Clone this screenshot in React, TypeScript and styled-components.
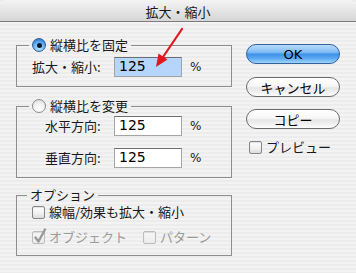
import React from "react";
import styled, { createGlobalStyle, css } from "styled-components";

const GlobalStyle = createGlobalStyle`
  html, body { margin: 0; padding: 0; background: #ffffff; }
  body { font-family: "Noto Sans CJK JP", "Noto Sans", sans-serif; }
  * { box-sizing: border-box; }
`;

const Window = styled.div`
  position: relative;
  width: 356px;
  height: 273px;
  overflow: hidden;
  background: repeating-linear-gradient(
    to bottom,
    #ececec 0px,
    #ececec 2px,
    #f3f3f3 2px,
    #f3f3f3 4px
  );
  font-family: "Noto Sans CJK JP", "Noto Sans", sans-serif;
  font-size: 13px;
  color: #1a1a1a;
`;

const TitleBar = styled.div`
  height: 22px;
  display: flex;
  align-items: center;
  justify-content: center;
  border-radius: 7px 7px 0 0;
  border-bottom: 1px solid #7d7d7d;
  background: linear-gradient(to bottom, #f4f4f4 0%, #e6e6e6 45%, #d6d6d6 100%);
  font-size: 13px;
  line-height: 21px;
  color: #1a1a1a;
  padding-top: 1px;
`;

const Body = styled.div`
  display: flex;
  padding: 15px 0 0 16px;
`;

const LeftColumn = styled.div`
  width: 216px;
  display: flex;
  flex-direction: column;
`;

const Group = styled.fieldset<{ $gap: number; $pt: number; $pb: number }>`
  margin: ${(p) => p.$gap}px 0 0 0;
  padding: ${(p) => p.$pt}px 0 ${(p) => p.$pb}px 0;
  border: 1px solid #8e8e8e;
  min-width: 0;
  display: flex;
  flex-direction: column;
`;

const Legend = styled.legend<{ $ml: number }>`
  margin-left: ${(p) => p.$ml}px;
  padding: 0 3px;
  height: 16px;
  line-height: 16px;
  display: flex;
  align-items: center;
  gap: 4px;
  font-size: 13px;
  color: #1a1a1a;
`;

const Radio = styled.span<{ $on?: boolean }>`
  width: 14px;
  height: 14px;
  border-radius: 50%;
  display: inline-flex;
  align-items: center;
  justify-content: center;
  flex: none;
  ${(p) =>
    p.$on
      ? css`
          border: 1px solid #3a5f95;
          background: radial-gradient(circle at 50% 75%, #bfe6ff 0%, #6db6f5 45%, #2f7fde 80%, #255fae 100%);
          &::after {
            content: "";
            width: 5px;
            height: 5px;
            border-radius: 50%;
            background: #0c1830;
          }
        `
      : css`
          border: 1px solid #8d8d8d;
          background: radial-gradient(circle at 50% 75%, #ffffff 0%, #f2f2f2 50%, #d2d2d2 100%);
        `}
`;

const FieldRow = styled.div<{ $mt?: number }>`
  display: flex;
  align-items: center;
  margin-top: ${(p) => p.$mt ?? 0}px;
  height: 20px;
`;

const FieldLabel = styled.span<{ $indent: number }>`
  width: 97px;
  padding-left: ${(p) => p.$indent}px;
  white-space: nowrap;
  font-size: 13px;
  line-height: 20px;
  color: #1a1a1a;
`;

const Input = styled.div<{ $selected?: boolean }>`
  width: 68px;
  height: 20px;
  border: 1px solid #a4a4a4;
  border-top-color: #6e6e6e;
  background: ${(p) => (p.$selected ? "#b6d5fa" : "#ffffff")};
  font-family: "DejaVu Sans", "Liberation Sans", sans-serif;
  font-size: 14px;
  line-height: 16px;
  padding: 0 0 0 4px;
  color: #000;
`;

const Percent = styled.span`
  margin-left: 8px;
  font-family: "DejaVu Sans", "Liberation Sans", sans-serif;
  font-size: 12px;
  color: #1a1a1a;
`;

const CheckRow = styled.div<{ $mt?: number; $pl?: number }>`
  display: flex;
  align-items: center;
  height: 16px;
  margin-top: ${(p) => p.$mt ?? 0}px;
  padding-left: ${(p) => p.$pl ?? 0}px;
`;

const CheckItem = styled.span<{ $disabled?: boolean; $ml?: number }>`
  display: inline-flex;
  align-items: center;
  gap: 4px;
  margin-left: ${(p) => p.$ml ?? 0}px;
  color: ${(p) => (p.$disabled ? "#9b9b9b" : "#1a1a1a")};
  font-size: 13px;
  line-height: 16px;
`;

const Box = styled.span<{ $disabled?: boolean }>`
  position: relative;
  width: 13px;
  height: 13px;
  flex: none;
  border-radius: 2px;
  border: 1px solid ${(p) => (p.$disabled ? "#bdbdbd" : "#878787")};
  background: ${(p) =>
    p.$disabled
      ? "linear-gradient(to bottom, #f8f8f8, #ebebeb)"
      : "linear-gradient(to bottom, #ffffff, #f0f0f0 60%, #dcdcdc)"};
  box-shadow: inset 0 1px 1px rgba(0, 0, 0, 0.12);
`;

const CheckMark = styled.svg`
  position: absolute;
  left: 0px;
  top: -4px;
  width: 14px;
  height: 16px;
`;

const RightColumn = styled.div`
  margin-left: 14px;
  width: 94px;
  display: flex;
  flex-direction: column;
`;

const AquaButton = styled.div<{ $default?: boolean; $mt: number }>`
  margin-top: ${(p) => p.$mt}px;
  height: 20px;
  border-radius: 10px;
  display: flex;
  align-items: center;
  justify-content: center;
  font-size: 13px;
  color: #000;
  ${(p) =>
    p.$default
      ? css`
          border: 1px solid #33619f;
          background: linear-gradient(
            to bottom,
            #b9dcfb 0%,
            #7fbcf4 40%,
            #3f92ea 52%,
            #5eaaf2 75%,
            #9fd6fd 100%
          );
          font-family: "DejaVu Sans", "Liberation Sans", sans-serif;
          font-size: 13px;
        `
      : css`
          border: 1px solid #6c6c6c;
          background: linear-gradient(
            to bottom,
            #ffffff 0%,
            #f7f7f7 45%,
            #e6e6e6 55%,
            #f4f4f4 85%,
            #ffffff 100%
          );
        `}
`;

const ArrowOverlay = styled.svg`
  position: absolute;
  left: 0;
  top: 0;
  width: 356px;
  height: 273px;
  pointer-events: none;
`;

const Check: React.FC<{ disabled?: boolean }> = ({ disabled }) => (
  <Box $disabled={disabled}>
    <CheckMark viewBox="0 0 14 16">
      <path
        d="M2.5 9.5 L5.5 13.5 L12 1.5"
        fill="none"
        stroke={disabled ? "#9a9a9a" : "#222"}
        strokeWidth="2.4"
        strokeLinecap="round"
        strokeLinejoin="round"
      />
    </CheckMark>
  </Box>
);

export default function App() {
  return (
    <>
      <GlobalStyle />
      <Window>
        <TitleBar>拡大・縮小</TitleBar>
        <Body>
          <LeftColumn>
            <Group $gap={0} $pt={4} $pb={9}>
              <Legend $ml={12}>
                <Radio $on />
                縦横比を固定
              </Legend>
              <FieldRow>
                <FieldLabel $indent={15}>拡大・縮小:</FieldLabel>
                <Input $selected>125</Input>
                <Percent>%</Percent>
              </FieldRow>
            </Group>

            <Group $gap={11} $pt={2} $pb={9}>
              <Legend $ml={12}>
                <Radio />
                縦横比を変更
              </Legend>
              <FieldRow>
                <FieldLabel $indent={28}>水平方向:</FieldLabel>
                <Input>125</Input>
                <Percent>%</Percent>
              </FieldRow>
              <FieldRow $mt={12}>
                <FieldLabel $indent={28}>垂直方向:</FieldLabel>
                <Input>125</Input>
                <Percent>%</Percent>
              </FieldRow>
            </Group>

            <Group $gap={9} $pt={1} $pb={10}>
              <Legend $ml={10}>オプション</Legend>
              <CheckRow $pl={15}>
                <CheckItem>
                  <Box />
                  線幅/効果も拡大・縮小
                </CheckItem>
              </CheckRow>
              <CheckRow $mt={9} $pl={15}>
                <CheckItem $disabled>
                  <Check disabled />
                  オブジェクト
                </CheckItem>
                <CheckItem $disabled $ml={16}>
                  <Box $disabled />
                  パターン
                </CheckItem>
              </CheckRow>
            </Group>
          </LeftColumn>

          <RightColumn>
            <AquaButton $default $mt={7}>
              OK
            </AquaButton>
            <AquaButton $mt={13}>キャンセル</AquaButton>
            <AquaButton $mt={12}>コピー</AquaButton>
            <CheckRow $mt={10} $pl={3}>
              <CheckItem>
                <Box />
                プレビュー
              </CheckItem>
            </CheckRow>
          </RightColumn>
        </Body>

        <ArrowOverlay viewBox="0 0 356 273">
          <line x1="182" y1="29" x2="163" y2="57" stroke="#e3161e" strokeWidth="2.2" strokeLinecap="round" />
          <polygon points="156,67 167.5,59.5 158.5,53.5" fill="#e3161e" />
        </ArrowOverlay>
      </Window>
    </>
  );
}
